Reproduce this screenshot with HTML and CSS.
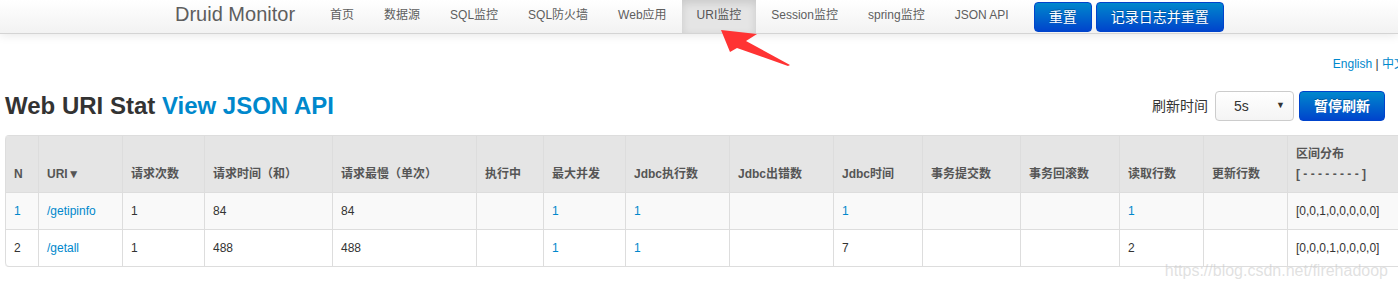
FILE: index.html
```html
<!DOCTYPE html>
<html lang="zh-CN">
<head>
  <meta charset="UTF-8">
  <title>Druid Stat Index</title>
  <link rel="stylesheet" href="styles.css">
</head>
<body>

<div class="navbar">
  <div class="navbar-inner">
    <a class="brand" href="#">Druid Monitor</a>
    <ul class="nav">
      <li><a href="#">首页</a></li>
      <li><a href="#">数据源</a></li>
      <li><a href="#">SQL监控</a></li>
      <li><a href="#">SQL防火墙</a></li>
      <li><a href="#">Web应用</a></li>
      <li class="active"><a href="#">URI监控</a></li>
      <li><a href="#">Session监控</a></li>
      <li><a href="#">spring监控</a></li>
      <li><a href="#">JSON API</a></li>
    </ul>
    <div class="nav-buttons">
      <button class="btn btn-primary">重置</button>
      <button class="btn btn-primary">记录日志并重置</button>
    </div>
  </div>
</div>

<div class="content">
  <div class="lang"><a href="#">English</a> | <a href="#">中文</a></div>

  <div class="title-row">
    <h3>Web URI Stat <a href="#">View JSON API</a></h3>
    <div class="refresh">
      <span class="refresh-label">刷新时间</span>
      <span class="select-wrap">
        <select id="refreshSeconds">
          <option value="5" selected>5s</option>
          <option value="10">10s</option>
          <option value="20">20s</option>
          <option value="30">30s</option>
        </select>
      </span>
      <button class="btn btn-primary btn-bold">暂停刷新</button>
    </div>
  </div>

  <table class="table table-bordered table-striped">
    <colgroup>
      <col class="w-n">
      <col class="w-uri">
      <col class="w-count">
      <col class="w-time">
      <col class="w-max">
      <col class="w-running">
      <col class="w-conc">
      <col class="w-jdbc">
      <col class="w-jdbc">
      <col class="w-jtime">
      <col class="w-commit">
      <col class="w-rollback">
      <col class="w-rows">
      <col class="w-rows">
      <col class="w-hist">
    </colgroup>
    <thead>
      <tr>
        <th>N</th>
        <th><a href="#" class="sort">URI▼</a></th>
        <th>请求次数</th>
        <th>请求时间（和）</th>
        <th>请求最慢（单次）</th>
        <th>执行中</th>
        <th>最大并发</th>
        <th>Jdbc执行数</th>
        <th>Jdbc出错数</th>
        <th>Jdbc时间</th>
        <th>事务提交数</th>
        <th>事务回滚数</th>
        <th>读取行数</th>
        <th>更新行数</th>
        <th>区间分布<br>[ - - - - - - - - ]</th>
      </tr>
    </thead>
    <tbody>
      <tr>
        <td><a href="#">1</a></td>
        <td><a href="#">/getipinfo</a></td>
        <td>1</td>
        <td>84</td>
        <td>84</td>
        <td></td>
        <td><a href="#">1</a></td>
        <td><a href="#">1</a></td>
        <td></td>
        <td><a href="#">1</a></td>
        <td></td>
        <td></td>
        <td><a href="#">1</a></td>
        <td></td>
        <td>[0,0,1,0,0,0,0,0]</td>
      </tr>
      <tr>
        <td>2</td>
        <td><a href="#">/getall</a></td>
        <td>1</td>
        <td>488</td>
        <td>488</td>
        <td></td>
        <td><a href="#">1</a></td>
        <td><a href="#">1</a></td>
        <td></td>
        <td>7</td>
        <td></td>
        <td></td>
        <td>2</td>
        <td></td>
        <td>[0,0,0,1,0,0,0,0]</td>
      </tr>
    </tbody>
  </table>
</div>

<!-- annotation drawn over the screenshot -->
<svg class="arrow" width="100" height="50" viewBox="0 0 100 50">
  <polygon points="1,2 37,6 26,13 70,37 68,38 17,20 10,24" fill="#f33"/>
</svg>

<div class="watermark">https://blog.csdn.net/firehadoop</div>

</body>
</html>
```

FILE: styles.css
```css
body {
  margin: 0;
  font-family: "Liberation Sans", "Noto Sans CJK SC", sans-serif;
  font-size: 12px;
  line-height: 20px;
  color: #333;
  background: #fff;
  overflow-x: hidden;
}

a {
  color: #0088cc;
  text-decoration: none;
}

/* top bar */
.navbar {
  background: linear-gradient(#ffffff, #f2f2f2);
  border-bottom: 1px solid #d4d4d4;
  box-shadow: 0 1px 10px rgba(0, 0, 0, 0.1);
}

.navbar-inner {
  display: flex;
  align-items: stretch;
  width: 1048px;
  height: 33px;
  margin: 0 auto;
  white-space: nowrap;
}

.navbar-inner > * {
  flex-shrink: 0;
}

.brand {
  padding-right: 20px;
  font-size: 20px;
  line-height: 29px;
  color: #5e5e5e;
}

.nav {
  display: flex;
  margin: 0;
  padding: 0;
  list-style: none;
}

.nav a {
  display: block;
  height: 31px;
  padding: 0 15px 2px;
  line-height: 31px;
  color: #5e5e5e;
}

.nav .active a {
  background: #e5e5e5;
  color: #555;
  box-shadow: inset 0 3px 8px rgba(0, 0, 0, 0.125);
}

.nav-buttons {
  display: flex;
  align-items: center;
  gap: 4px;
  margin-left: 10px;
}

.btn {
  height: 30px;
  padding: 0 14px;
  font-family: inherit;
  font-size: 14px;
  line-height: 28px;
  white-space: nowrap;
  border-radius: 4px;
  cursor: pointer;
}

.btn-primary {
  color: #fff;
  text-shadow: 0 -1px 0 rgba(0, 0, 0, 0.25);
  background: linear-gradient(#0088cc, #0044cc);
  border: 1px solid #0044cc;
}

.btn-bold {
  font-weight: bold;
}

/* page */
.content {
  padding: 0 5px;
}

.lang {
  margin: 20px -13px 0 0;
  text-align: right;
  color: #333;
}

.title-row {
  display: flex;
  align-items: center;
  justify-content: space-between;
  margin-top: 17px;
  margin-right: 8px;
}

h3 {
  margin: 0;
  font-size: 24px;
  line-height: 30px;
  font-weight: bold;
  color: #333;
}

.refresh {
  display: flex;
  align-items: center;
}

.refresh-label {
  font-size: 14px;
  margin-right: 7px;
}

.select-wrap {
  position: relative;
  margin-right: 5px;
}

.select-wrap select {
  appearance: none;
  -webkit-appearance: none;
  width: 79px;
  height: 30px;
  padding: 0 0 0 18px;
  font-family: inherit;
  font-size: 14px;
  color: #333;
  background: linear-gradient(#ffffff, #f4f4f4);
  border: 1px solid #ccc;
  border-radius: 4px;
}

.select-wrap::after {
  content: "▼";
  position: absolute;
  right: 9px;
  top: 7px;
  font-size: 9px;
  line-height: 14px;
  color: #333;
  pointer-events: none;
}

/* table */
.table {
  table-layout: fixed;
  width: 1398px;
  margin-top: 14px;
  border: 1px solid #ddd;
  border-left: 0;
  border-collapse: separate;
  border-spacing: 0;
  border-radius: 4px;
}

.table th,
.table td {
  box-sizing: border-box;
  padding: 8px;
  text-align: left;
  vertical-align: top;
  border-left: 1px solid #ddd;
  border-top: 1px solid #ddd;
  white-space: nowrap;
  overflow: hidden;
}

.table thead th {
  border-top: 0;
  vertical-align: bottom;
  font-weight: bold;
  color: #555;
  background: #e5e5e5;
}

.table thead th:first-child {
  border-top-left-radius: 4px;
}

.table .sort {
  color: #555;
}

.table-striped tbody tr:nth-child(odd) td {
  background: #f9f9f9;
}

.table tbody tr:last-child td:first-child {
  border-bottom-left-radius: 4px;
}

.w-n { width: 33px; }
.w-uri { width: 84px; }
.w-count { width: 82px; }
.w-time { width: 128px; }
.w-max { width: 144px; }
.w-running { width: 67px; }
.w-conc { width: 82px; }
.w-jdbc { width: 104px; }
.w-jtime { width: 89px; }
.w-commit { width: 98px; }
.w-rollback { width: 99px; }
.w-rows { width: 84px; }
.w-hist { width: 116px; }

/* overlays */
.arrow {
  position: absolute;
  left: 720px;
  top: 28px;
}

.watermark {
  position: absolute;
  right: 10px;
  top: 261px;
  font-size: 16px;
  line-height: 20px;
  color: rgba(200, 200, 200, 0.55);
  white-space: nowrap;
}
```
